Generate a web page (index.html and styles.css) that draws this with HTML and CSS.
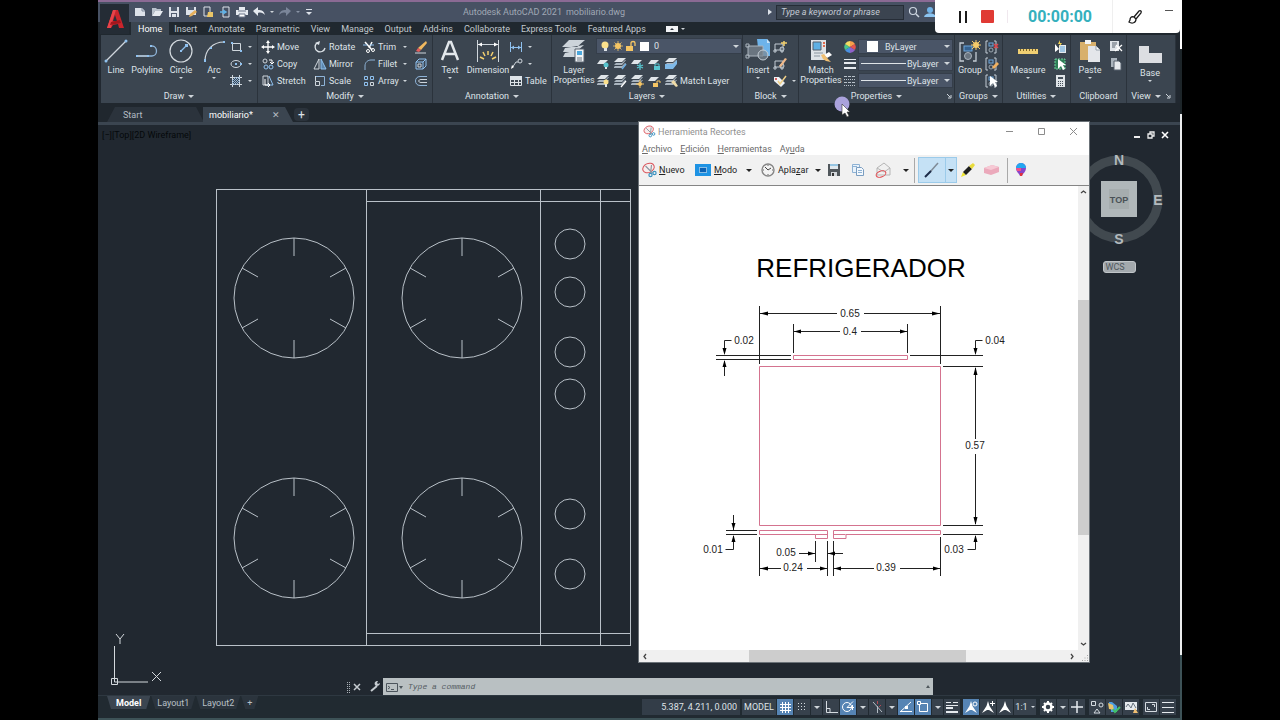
FILE: index.html
```html
<!DOCTYPE html>
<html lang="en">
<head>
<meta charset="utf-8">
<title>Autodesk AutoCAD 2021 - mobiliario.dwg</title>
<link rel="stylesheet" href="styles.css">
</head>
<body>
<svg class="defs" aria-hidden="true">
  <symbol id="stack" viewBox="0 0 14 14"><path d="M5 1h8l-4 4H1z" fill="#dfe4e8"/><path d="M2 7l1-1h6l3-3h1l-4 5H1zM1 10l1-1h7l3-3h1l-4 5H1z" fill="#a9b4be"/></symbol>
  <symbol id="sheet" viewBox="0 0 14 14"><path d="M4 3h8L8 7H1z" fill="#dfe4e8"/></symbol>
  <symbol id="arrow" viewBox="0 0 14 14"><path d="M5 2v10l3-3 2 4 2-1-2-4h3z" fill="#fff"/></symbol>
  <symbol id="group" viewBox="0 0 14 14"><path d="M3 1H1v12h2M9 1h2v12H9" fill="none" stroke="#c3ccd4"/><rect x="4" y="3" width="4" height="3" fill="none" stroke="#6fa8dc"/><circle cx="6" cy="10" r="2" fill="none" stroke="#9aa5af"/></symbol>
  <symbol id="blk" viewBox="0 0 14 14"><path d="M2 4h8v6H2zM1 10h2v2H1zM8 10h2v2H8z" fill="none" stroke="#c3ccd4"/><circle cx="9" cy="9" r="2" fill="#6b7681" stroke="#c3ccd4"/></symbol>
  <symbol id="scissor" viewBox="0 0 16 16"><ellipse cx="7" cy="6" rx="6" ry="4.5" transform="rotate(-25 7 6)" fill="#f8eeee" stroke="#d9535a"/><path d="M4 4l7 7M10 3l-1 9" stroke="#8d98a2" stroke-width="1.2"/><circle cx="9" cy="13" r="1.6" fill="none" stroke="#3d93c0" stroke-width="1.2"/><circle cx="13" cy="11" r="1.6" fill="none" stroke="#3d93c0" stroke-width="1.2"/></symbol>
  <symbol id="person" viewBox="0 0 14 14"><path d="M7 1l1.500 5L13 13l-5-3h-2l-5 3 4.500-7z" fill="#fff"/></symbol>
  <symbol id="burner" viewBox="-61 -61 122 122"><circle r="60"/><path d="M0-60v18M0 60V42M52-30l-16 9M-52-30l16 9M52 30l-16-9M-52 30l16-9"/></symbol>
</svg>

<div class="app">
  <header class="titlebar">
    <button class="logo" aria-label="Application menu"><svg width="22" height="22" viewBox="0 0 22 22"><path d="M3 20L9 2h5l6 18h-5l-1-4-5 1-2 3z" fill="#c9252c"/><path d="M9 2h3l-3 9-2 9H3z" fill="#e8434a"/><path d="M11 7l2 6H9z" fill="#28303a"/><path d="M7 14l9-2 1 3-11 2z" fill="#a3161d"/></svg></button>
    <div class="quick">
      <button aria-label="New"><svg width="12" height="12" viewBox="0 0 12 12"><path d="M1 2h7l3 3v5H1z" fill="#dde2ea"/><path d="M8 2v3h3" fill="none" stroke="#7c879a"/></svg></button>
      <button aria-label="Open"><svg width="12" height="12" viewBox="0 0 12 12"><path d="M1 10V2h4l1 1h4v2H4z" fill="#b9c1cc"/><path d="M4 5h8l-3 5H1z" fill="#e6eaf0"/></svg></button>
      <button aria-label="Save"><svg width="12" height="12" viewBox="0 0 12 12"><path d="M1 1h10v10H1z" fill="#dde2ea"/><path d="M3 1h6v4H3zM3 7h6v4H3z" fill="#525d70"/><path d="M4 8h4v3H4z" fill="#dde2ea"/></svg></button>
      <button aria-label="Save as"><svg width="12" height="12" viewBox="0 0 12 12"><path d="M1 1h10v8H1z" fill="#dde2ea"/><path d="M3 1h6v3H3z" fill="#525d70"/><path d="M4 11l1-3 5-4 2 2-5 4z" fill="#e5b05c"/></svg></button>
      <button aria-label="Open from web"><svg width="12" height="12" viewBox="0 0 12 12"><path d="M2 1h6v9H2z" fill="none" stroke="#dde2ea"/><path d="M6 6h5v5H5z" fill="#eac567"/></svg></button>
      <button aria-label="Save to mobile"><svg width="12" height="12" viewBox="0 0 12 12"><path d="M4 1h6v10H4z" fill="none" stroke="#dde2ea"/><path d="M1 6h5M4 4l3 2-3 2" fill="none" stroke="#5fb2e8" stroke-width="1.500"/></svg></button>
      <button aria-label="Print"><svg width="12" height="12" viewBox="0 0 12 12"><path d="M3 1h6v3h3v5H0V4h3z" fill="#e6eaf0"/><path d="M3 8h6v3H3z" fill="#fff" stroke="#6c778a"/><path d="M2 5h8" stroke="#6c778a"/></svg></button>
      <button aria-label="Undo"><svg width="12" height="12" viewBox="0 0 12 12"><path d="M0 5l5-4v3c4 0 6 1 7 5-2-2-4-3-7-2v3z" fill="#e6eaf0"/></svg></button><i class="car"></i>
      <button aria-label="Redo"><svg width="12" height="12" viewBox="0 0 12 12"><path d="M12 5L7 1v3C3 4 1 5 0 9c2-2 4-3 7-2v3z" fill="#7b869a"/></svg></button><i class="car dim"></i>
      <button aria-label="Customize"><svg width="8" height="8" viewBox="0 0 8 8"><path d="M1 1.500h6" stroke="#dde2ea"/><path d="M1 4h6L4 7z" fill="#dde2ea"/></svg></button>
    </div>
    <div class="caption"><span>Autodesk AutoCAD 2021</span><span>mobiliario.dwg</span></div>
    <div class="search"><i class="tri-r"></i><input type="text" aria-label="Search" placeholder="Type a keyword or phrase"><svg width="12" height="12" viewBox="0 0 12 12"><circle cx="5" cy="5" r="3.500" fill="none" stroke="#cdd5e0" stroke-width="1.200"/><path d="M8 8l3 3" stroke="#cdd5e0" stroke-width="1.500"/></svg><svg width="12" height="12" viewBox="0 0 12 12"><circle cx="6" cy="4" r="3" fill="#6fb1e6"/><path d="M0 11c1-5 11-5 12 0z" fill="#8cc4f0"/></svg></div>
  </header>

  <nav class="tabs">
    <button class="on">Home</button><button>Insert</button><button>Annotate</button><button>Parametric</button><button>View</button><button>Manage</button><button>Output</button><button>Add-ins</button><button>Collaborate</button><button>Express Tools</button><button>Featured Apps</button><button class="min" aria-label="Minimize ribbon"><svg width="12" height="8" viewBox="0 0 12 8"><rect y="1" width="12" height="6" fill="#f2f4f6"/><path d="M4 5h4L6 3z" fill="#28303a"/></svg><i class="car"></i></button>
  </nav>

  <section class="ribbon">
    <div class="panel p-draw">
      <div class="body">
        <button class="big w30"><svg width="26" height="26" viewBox="0 0 26 26"><path d="M3 23L23 3" stroke="#cfd6dc" stroke-width="1.200"/><circle cx="3" cy="23" r="1.500" fill="#8fc1ef"/><circle cx="23" cy="3" r="1.500" fill="#8fc1ef"/></svg>Line</button>
        <button class="big w32"><svg width="26" height="26" viewBox="0 0 26 26"><path d="M3 18h15c6 0 6-10 0-10" fill="none" stroke="#8fb4d8" stroke-width="1.300"/><path d="M3 18h12" stroke="#cfd6dc"/><path d="M2 17h2v2H2zM13 17h2v2h-2zM16 7h2v2h-2z" fill="#8fc1ef"/></svg>Polyline</button>
        <button class="big w36"><svg width="26" height="26" viewBox="0 0 26 26"><circle cx="13" cy="13" r="11" fill="none" stroke="#d5dbe0" stroke-width="1.200"/><path d="M13 13l5-5" stroke="#8fc1ef" stroke-width="1.300"/><path d="M12 12h2v2h-2zM17 6h3v3h-3z" fill="#8fc1ef"/></svg>Circle<i class="car"></i></button>
        <button class="big w30"><svg width="26" height="26" viewBox="0 0 26 26"><path d="M4 23C4 12 12 4 23 4" fill="none" stroke="#d5dbe0" stroke-width="1.200"/><path d="M3 21h2v3H3zM9 9h2v2H9zM22 3h2v2h-2z" fill="#8fc1ef"/></svg>Arc<i class="car"></i></button>
        <div class="col">
          <button class="sm" aria-label="Rectangle"><svg width="14" height="14" viewBox="0 0 14 14"><path d="M3.500 3.500h8v7h-8z" fill="none" stroke="#cfd6dc"/><path d="M2 2h2v2H2zM11 10h2v2h-2z" fill="#8fc1ef"/></svg><i class="car"></i></button>
          <button class="sm" aria-label="Ellipse"><svg width="14" height="14" viewBox="0 0 14 14"><ellipse cx="7" cy="7" rx="5" ry="3.500" fill="none" stroke="#cfd6dc"/><path d="M6 6h2v2H6zM11 6h2v2h-2z" fill="#8fc1ef"/></svg><i class="car"></i></button>
          <button class="sm" aria-label="Hatch"><svg width="14" height="14" viewBox="0 0 14 14"><path d="M3.500 1v12M10.500 1v12M1 3.500h12M1 10.500h12" stroke="#cfd6dc"/><path d="M3 7l4-4M3 11l8-8M7 11l4-4M5 11l6-6M3 9l6-6" stroke="#8fb4d8"/></svg><i class="car"></i></button>
        </div>
      </div>
      <button class="foot">Draw<i class="car lg"></i></button>
    </div>

    <div class="panel p-modify">
      <div class="body pad3">
        <div class="col w52">
          <button class="sm"><svg width="14" height="14" viewBox="0 0 14 14"><path d="M7 2v10M2 7h10" stroke="#fff" stroke-width="1.300"/><path d="M7 0l2 3H5zM7 14l2-3H5zM0 7l3-2v4zM14 7l-3-2v4z" fill="#fff"/></svg>Move</button>
          <button class="sm"><svg width="14" height="14" viewBox="0 0 14 14"><circle cx="4" cy="4" r="2" fill="none" stroke="#cfd6dc"/><path d="M8 3h3v4M9 5l2 2 2-2" fill="none" stroke="#fff"/><circle cx="5" cy="10" r="2" fill="none" stroke="#8fc1ef"/><circle cx="10" cy="10" r="2" fill="none" stroke="#8fc1ef"/></svg>Copy</button>
          <button class="sm"><svg width="14" height="14" viewBox="0 0 14 14"><path d="M2 2h5v9H2z" fill="none" stroke="#cfd6dc"/><path d="M8 2l4 9H6" fill="none" stroke="#8fc1ef"/><path d="M4 5v6l4 0M7 9l2 2-2 2" fill="none" stroke="#fff"/></svg>Stretch</button>
        </div>
        <div class="col w49">
          <button class="sm"><svg width="14" height="14" viewBox="0 0 14 14"><path d="M4 3a5 5 0 1 0 8 5" fill="none" stroke="#dde3e8" stroke-width="1.300"/><path d="M7 1l-1 4-4-2z" fill="#dde3e8"/></svg>Rotate</button>
          <button class="sm"><svg width="14" height="14" viewBox="0 0 14 14"><path d="M6 2v10H1z" fill="none" stroke="#cfd6dc"/><path d="M8 2v10h5z" fill="#5c86ad" stroke="#8fc1ef"/></svg>Mirror</button>
          <button class="sm"><svg width="14" height="14" viewBox="0 0 14 14"><path d="M2.500 2.500h9v9H8" fill="none" stroke="#8fb4d8"/><path d="M2.500 7.500h4v4h-4zM2.500 2v5" fill="none" stroke="#cfd6dc"/></svg>Scale</button>
        </div>
        <div class="col w52">
          <button class="sm"><svg width="14" height="14" viewBox="0 0 14 14"><path d="M3 2l7 8M10 2L7 8" stroke="#fff" stroke-width="1.500"/><path d="M1 5h4M8 5h4" stroke="#8fc1ef"/><circle cx="6" cy="11" r="1.500" fill="none" stroke="#fff"/><circle cx="11" cy="10" r="1.500" fill="none" stroke="#fff"/></svg><span>Trim</span><i class="car"></i></button>
          <button class="sm"><svg width="14" height="14" viewBox="0 0 14 14"><path d="M3 13V9c0-4 3-6 6-6h4" fill="none" stroke="#8fb4d8"/></svg><span>Fillet</span><i class="car"></i></button>
          <button class="sm"><svg width="14" height="14" viewBox="0 0 14 14"><path d="M2.500 2.500h3v3h-3zM8.500 2.500h3v3h-3zM2.500 8.500h3v3h-3z" fill="none" stroke="#8fc1ef"/><path d="M8.500 8.500h3v3h-3z" fill="none" stroke="#cfd6dc"/></svg><span>Array</span><i class="car"></i></button>
        </div>
        <div class="col">
          <button class="sm" aria-label="Erase"><svg width="14" height="14" viewBox="0 0 14 14"><path d="M12 1l1 2-6 7-3-2z" fill="#f0b95f"/><path d="M4 8l3 2-2 2-3-1z" fill="#e35b5b"/><path d="M1 13h11" stroke="#cfd6dc"/></svg></button>
          <button class="sm" aria-label="Explode"><svg width="14" height="14" viewBox="0 0 14 14"><path d="M2 5h7v7H2zM2 5l3-3h7v7l-3 3M9 5l3-3" fill="none" stroke="#8fc1ef"/><path d="M4 7h3v3H4z" fill="none" stroke="#cfd6dc"/></svg></button>
          <button class="sm" aria-label="Offset"><svg width="14" height="14" viewBox="0 0 14 14"><path d="M13 2.500H6C0 2.500 0 11.500 6 11.500h7" fill="none" stroke="#8fb4d8"/><path d="M13 5.500H7C4 5.500 4 8.500 7 8.500h6" fill="none" stroke="#cfd6dc"/></svg></button>
        </div>
      </div>
      <button class="foot">Modify<i class="car lg"></i></button>
    </div>

    <div class="panel p-annot">
      <div class="body">
        <button class="big w34"><svg width="26" height="26" viewBox="0 0 26 26"><path d="M5 22L12 4h2l7 18M8 16h10" fill="none" stroke="#e2e7eb" stroke-width="2.500"/></svg>Text<i class="car"></i></button>
        <button class="big w42"><svg width="26" height="26" viewBox="0 0 26 26"><path d="M2.500 2v22M23.500 2v22M2 6.500h22" stroke="#cfd6dc"/><path d="M3 6.500l4-2v4zM23 6.500l-4-2v4z" fill="#fff"/><path d="M13 13v4M8 14l2 4M18 14l-2 4M5 19l4 2M21 19l-4 2" stroke="#f3d06e" stroke-width="1.500"/></svg>Dimension</button>
        <div class="col">
          <button class="sm" aria-label="Linear"><svg width="14" height="14" viewBox="0 0 14 14"><path d="M1.500 2v10M12.500 2v10M2 7.500h10" stroke="#8fc1ef"/><path d="M2 7.500l3-2v4zM12 7.500l-3-2v4z" fill="#8fc1ef"/></svg><i class="car"></i></button>
          <button class="sm" aria-label="Leader"><svg width="14" height="14" viewBox="0 0 14 14"><path d="M3 11l4-6h2" fill="none" stroke="#cfd6dc"/><circle cx="11" cy="4" r="2" fill="none" stroke="#cfd6dc"/><path d="M2 12l1-4 2 2z" fill="#fff"/></svg><i class="car"></i></button>
          <button class="sm"><svg width="14" height="14" viewBox="0 0 14 14"><path d="M1.500 2.500h11v9h-11zM1 5.500h12M1 8.500h12M5.500 5v7M9.500 5v7" fill="none" stroke="#dde3e8"/><path d="M1 2h12v3H1z" fill="#dde3e8"/></svg>Table</button>
        </div>
      </div>
      <button class="foot">Annotation<i class="car lg"></i></button>
    </div>

    <div class="panel p-layers">
      <div class="body">
        <button class="big w44"><svg width="26" height="26" viewBox="0 0 26 26"><path d="M8 2h16l-8 7H1zM4 10l-2 4h13l8-7zM4 15l-2 4h12l8-8z" fill="#cdd4da"/><path d="M14 11h9v13h-9z" fill="#f1f4f6" stroke="#56616c"/><path d="M16 13h5v4h-5z" fill="#4ba7dc"/><path d="M16 20h5M16 22h5" stroke="#68737e"/></svg>Layer<br>Properties</button>
        <div class="col stretch">
          <div class="drop">
            <svg width="12" height="12" viewBox="0 0 12 12"><circle cx="6" cy="5" r="3.500" fill="#fbe08c"/><path d="M5 8h3v3H5z" fill="#dfe4e8"/></svg>
            <svg width="12" height="12" viewBox="0 0 12 12"><circle cx="6" cy="6" r="3" fill="#f5c564"/><path d="M6 1v10M1 6h10M2.500 2.500l7 7M9.500 2.500l-7 7" stroke="#f5c564" stroke-width=".8"/></svg>
            <svg width="12" height="12" viewBox="0 0 12 12"><path d="M1 6h7v5H1z" fill="#f5c564"/><path d="M6 6V3c0-2 4-2 4 0v3" fill="none" stroke="#f5c564" stroke-width="1.300"/></svg>
            <i class="swatch"></i>
            <select aria-label="Layer"><option>0</option></select><i class="car lg"></i>
          </div>
          <div class="icons">
            <button aria-label="Off"><svg width="14" height="14"><use href="#sheet"/><circle cx="10" cy="8" r="2.500" fill="#58c5cf"/><path d="M9 10h2v2H9z" fill="#dfe4e8"/></svg></button>
            <button aria-label="Isolate"><svg width="14" height="14"><use href="#stack"/><path d="M9 12l4-5" stroke="#6fb1e6" stroke-width="1.500"/></svg></button>
            <button aria-label="Freeze"><svg width="14" height="14"><use href="#sheet"/><path d="M10 6v7M7 8l6 3M13 8l-6 3" stroke="#58c5cf" stroke-width="1.300"/></svg></button>
            <button aria-label="Lock"><svg width="14" height="14"><use href="#sheet"/><path d="M7 9h6v4H7z" fill="#58c5cf"/><path d="M8 9V7h4v2" fill="none" stroke="#58c5cf"/></svg></button>
            <button aria-label="Make current"><svg width="14" height="14"><use href="#stack"/><path d="M1 7h8l4-4v4l-4 5H1z" fill="#7fb9e8"/></svg></button>
          </div>
          <div class="icons">
            <button aria-label="On"><svg width="14" height="14"><use href="#stack"/><circle cx="10" cy="8" r="2.500" fill="#fbe08c"/><path d="M9 10h2v3H9z" fill="#dfe4e8"/></svg></button>
            <button aria-label="Unisolate"><svg width="14" height="14"><use href="#stack"/><path d="M8 13l5-6" stroke="#fff" stroke-width="1.300"/></svg></button>
            <button aria-label="Thaw"><svg width="14" height="14"><use href="#stack"/><circle cx="10" cy="10" r="2" fill="#f5c564"/><path d="M10 6v8M6 10h8" stroke="#f5c564"/></svg></button>
            <button aria-label="Unlock"><svg width="14" height="14"><use href="#sheet"/><path d="M6 9h5v4H6z" fill="#f5c564"/><path d="M10 9V7h3v2" fill="none" stroke="#f5c564"/></svg></button>
            <button><svg width="14" height="14"><use href="#stack"/><path d="M7 8l5 5 2-1-4-6z" fill="#f0dca8"/></svg>Match Layer</button>
          </div>
        </div>
      </div>
      <button class="foot">Layers<i class="car lg"></i></button>
    </div>

    <div class="panel p-block">
      <div class="body">
        <button class="big w30"><svg width="26" height="26" viewBox="0 0 26 26"><path d="M12 1h10l3 3v14H14z" fill="#6db3ea"/><path d="M22 1v4h3" fill="#c8e2f7"/><path d="M3 8h15v10H3z" fill="#6a7580" stroke="#aab4bd"/><path d="M1 6h3v3H1zM1 17h3v3H1z" fill="none" stroke="#aab4bd"/><circle cx="18" cy="17" r="5" fill="#7b8690" fill-opacity=".7" stroke="#c3ccd4"/></svg>Insert<i class="car"></i></button>
        <div class="col">
          <button class="sm" aria-label="Create block"><svg width="14" height="14"><use href="#blk"/><path d="M11 1v5M8 3h6" stroke="#f3d06e" stroke-width="1.500"/></svg></button>
          <button class="sm" aria-label="Edit block"><svg width="14" height="14"><use href="#blk"/><path d="M6 9l6-8 2 1-6 8z" fill="#f0b98a"/></svg></button>
          <button class="sm" aria-label="Attributes"><svg width="14" height="14" viewBox="0 0 14 14"><path d="M1 3h5l6 6-4 4-7-6z" fill="#eef1f4"/><path d="M5 7l2 3 6-8" fill="none" stroke="#f0d088" stroke-width="1.500"/><circle cx="3" cy="5" r="1" fill="#c33"/></svg><i class="car"></i></button>
        </div>
      </div>
      <button class="foot">Block<i class="car lg"></i></button>
    </div>

    <div class="panel p-props">
      <div class="body">
        <button class="big w44"><svg width="26" height="26" viewBox="0 0 26 26"><path d="M3 2h15v20H3z" fill="#dfe4e8"/><path d="M5 4h8v8H5z" fill="#5eb0e4" stroke="#56616c"/><path d="M15 5h2M15 8h2" stroke="#e06a4e" stroke-width="2"/><path d="M6 15h9M6 18h6" stroke="#8b96a0"/><path d="M21 14l3 3-5 3-3-3z" fill="#fff"/><path d="M13 17l3-1 4 5 3 3-5-1-3-2z" fill="#f0bf72"/></svg>Match<br>Properties</button>
        <div class="col stretch">
          <div class="prow"><svg width="14" height="14" viewBox="-7 -7 14 14"><path d="M0 0V-6A6 6 0 0 1 5-3z" fill="#f6a04a"/><path d="M0 0l5-3a6 6 0 0 1 0 6z" fill="#e5544d"/><path d="M0 0l5 3a6 6 0 0 1-5 3z" fill="#8f62c9"/><path d="M0 0v6a6 6 0 0 1-5-3z" fill="#4a8fe0"/><path d="M0 0l-5 3a6 6 0 0 1 0-6z" fill="#4cc48a"/><path d="M0 0l-5-3a6 6 0 0 1 5-3z" fill="#f4dc62"/></svg><div class="drop"><i class="swatch sp"></i><select aria-label="Object color"><option>ByLayer</option></select><i class="car lg"></i></div></div>
          <div class="prow"><svg width="14" height="14" viewBox="0 0 14 14"><path d="M1 2.500h12" stroke="#e6eaee"/><path d="M1 6h12M1 11h12" stroke="#e6eaee" stroke-width="2"/></svg><div class="drop"><i class="rule"></i><select aria-label="Lineweight"><option>ByLayer</option></select><i class="car lg"></i></div></div>
          <div class="prow"><svg width="14" height="14" viewBox="0 0 14 14"><path d="M1 2.500h12M1 8.500h12" stroke="#b9c2ca" stroke-dasharray="3 1"/><path d="M1 5.500h12M1 11.500h12" stroke="#b9c2ca" stroke-dasharray="1 1"/></svg><div class="drop"><i class="rule"></i><select aria-label="Linetype"><option>ByLayer</option></select><i class="car lg"></i></div></div>
        </div>
      </div>
      <button class="foot">Properties<i class="car lg"></i><svg class="launch" width="6" height="6" viewBox="0 0 6 6"><path d="M1 1l3 3M5 2v3H2" fill="none" stroke="#cfd6dc"/></svg></button>
    </div>

    <div class="panel p-groups">
      <div class="body">
        <button class="big w30"><svg width="26" height="26" viewBox="0 0 26 26"><path d="M7 5H3v18h4M16 23h3V14" fill="none" stroke="#c3ccd4" stroke-width="1.300"/><rect x="7" y="8" width="8" height="5" fill="#36628f" stroke="#6fa8dc"/><circle cx="11" cy="18" r="3.500" fill="#6a7580" stroke="#aab4bd"/><circle cx="19" cy="7" r="3" fill="#f3c96a"/><path d="M19 2v10M14 7h10M15 3l8 8M23 3l-8 8" stroke="#f3c96a"/></svg>Group</button>
        <div class="col">
          <button class="sm" aria-label="Ungroup"><svg width="14" height="14"><use href="#group"/><path d="M9 4l4 4M13 4l-4 4" stroke="#e0444a" stroke-width="1.500"/></svg></button>
          <button class="sm" aria-label="Group edit"><svg width="14" height="14"><use href="#group"/><path d="M7 10l5-5 2 2-5 5z" fill="#f0b05f"/></svg></button>
          <button class="sm" aria-label="Group selection"><svg width="14" height="14"><use href="#group"/><use href="#arrow"/></svg></button>
        </div>
      </div>
      <button class="foot">Groups<i class="car lg"></i></button>
    </div>

    <div class="panel p-utils">
      <div class="body">
        <button class="big w50"><svg width="26" height="26" viewBox="0 0 26 26"><path d="M3 11h20v5H3z" fill="#f0cf72"/><path d="M5.500 11v2M8.500 11v2M11.500 11v2M14.500 11v2M17.500 11v2M20.500 11v2" stroke="#7c6428"/></svg>Measure<i class="car"></i></button>
        <div class="col">
          <button class="sm" aria-label="Quick select"><svg width="14" height="14" viewBox="0 0 14 14"><path d="M6 5h7v8H6z" fill="#e6eaee"/><path d="M7 7h5M7 9h5M7 11h5" stroke="#5ba3da"/><path d="M2 4v8l4-3z" fill="#fff"/><path d="M7 0L5 4h2L6 7l3-4H7z" fill="#f5d34c"/></svg></button>
          <button class="sm" aria-label="Select all"><svg width="14" height="14"><rect x="2" y="2" width="10" height="10" fill="#2f7d57" stroke="#6fd39d" stroke-dasharray="2 1"/><use href="#arrow"/></svg></button>
          <button class="sm" aria-label="Calculator"><svg width="14" height="14" viewBox="0 0 14 14"><path d="M3 1h9v12H3z" fill="#dfe4e8"/><path d="M5 3h5v2H5z" fill="#46515c"/><path d="M5 7.500h5M5 9.500h5M5 11.500h5" stroke="#46515c" stroke-dasharray="1 1"/></svg></button>
        </div>
      </div>
      <button class="foot">Utilities<i class="car lg"></i></button>
    </div>

    <div class="panel p-clip">
      <div class="body">
        <button class="big w38"><svg width="26" height="26" viewBox="0 0 26 26"><path d="M3 4h16v18H3z" fill="#d8b06c"/><path d="M8 2h6v4H8z" fill="#f2f4f6"/><path d="M11 8h8l4 4v12H11z" fill="#e4e6ea"/><path d="M19 8v4h4" fill="#fff" stroke="#98a2ac"/></svg>Paste<i class="car"></i></button>
        <div class="col">
          <button class="sm" aria-label="Cut"><svg width="14" height="14" viewBox="0 0 14 14"><path d="M1 1h9v10H1z" fill="#dfe4e8"/><path d="M3 3h5M3 5h5M3 7h3" stroke="#56616c"/><path d="M6 11l7-6M7 5l6 6" stroke="#fff" stroke-width="1.300"/></svg></button>
          <button class="sm" aria-label="Copy clip"><svg width="14" height="14" viewBox="0 0 14 14"><path d="M2 1h6v9H2z" fill="#aab4bd"/><path d="M5 4h5l2 2v7H5z" fill="#e6eaee" stroke="#56616c"/></svg></button>
        </div>
      </div>
      <button class="foot">Clipboard</button>
    </div>

    <div class="panel p-view">
      <div class="body">
        <button class="big w46 base"><svg width="26" height="26" viewBox="0 0 26 26"><path d="M2 5h10v7h13v10H2z" fill="#dcdee2"/></svg>Base<i class="car"></i></button>
      </div>
      <button class="foot">View<i class="car lg"></i><svg width="6" height="6" viewBox="0 0 6 6"><path d="M1 1l3 3M5 2v3H2" fill="none" stroke="#cfd6dc"/></svg></button>
    </div>
  </section>

  <nav class="files">
    <button class="file">Start</button>
    <button class="file on">mobiliario*<span class="x">✕</span></button>
    <button class="add">+</button>
  </nav>

  <main class="canvas">
    <div class="mode">[−][Top][2D Wireframe]</div>
    <svg class="stove" width="416" height="458" viewBox="215 189 416 458">
      <path d="M216 189.500h414.500M216 645.500h414.500M216.500 189v457M366.500 189v457M540.500 189v457M600.500 189v457M630.500 189v457M366 201.500h264M366 633.500h264"/>
      <use href="#burner" x="233" y="237" width="122" height="122"/><use href="#burner" x="401" y="237" width="122" height="122"/>
      <use href="#burner" x="233" y="477" width="122" height="122"/><use href="#burner" x="401" y="477" width="122" height="122"/>
      <circle cx="570" cy="244" r="15"/><circle cx="570" cy="292" r="15"/><circle cx="570" cy="352" r="15"/><circle cx="570" cy="394" r="15"/><circle cx="570" cy="514" r="15"/><circle cx="570" cy="574" r="15"/>
    </svg>
    <svg class="ucs" width="56" height="60" viewBox="108 630 56 60"><path d="M114.500 646v36H148M111.500 678.500h6v6h-6zM116 634l4 5 4-5M120 639v5M152 672l9 9M161 672l-9 9"/></svg>
    <div class="mdi"><button aria-label="Minimize drawing"><svg width="8" height="8" viewBox="0 0 8 8"><path d="M1 6h6" stroke="#eee" stroke-width="2"/></svg></button><button aria-label="Restore drawing"><svg width="8" height="8" viewBox="0 0 8 8"><path d="M3 3V1h4v4H5M1 3h4v4H1z" fill="none" stroke="#eee" stroke-width="1.300"/></svg></button><button aria-label="Close drawing"><svg width="8" height="8" viewBox="0 0 8 8"><path d="M1 1l6 6M7 1L1 7" stroke="#fff" stroke-width="1.600"/></svg></button></div>
    <div class="cube">
      <svg width="96" height="96" viewBox="-48 -48 96 96"><circle r="39" fill="none" stroke="#41494f" stroke-width="9"/><path d="M-18-18h36v36h-36z" fill="#b0b7b9"/><path d="M-10-10h20v20h-20z" fill="#a6adae"/><text class="face" y="4">TOP</text><text y="-34">N</text><text y="45">S</text><text x="39" y="6">E</text></svg>
      <button class="wcs">WCS</button>
    </div>
    <form class="cmd">
      <svg width="36" height="16" viewBox="0 0 36 16"><path d="M1.500 3v11M3.500 3v11" stroke="#a9b0b6" stroke-dasharray="1 1"/><path d="M8 5l6 6M14 5l-6 6" stroke="#c6ccd1" stroke-width="1.500"/><path d="M25 12l6-5" stroke="#c6ccd1" stroke-width="2"/><path d="M34 4l-2 1-1-1 1-2c-3 0-4 2-3 4s5 1 5-2z" fill="#c6ccd1"/></svg>
      <label class="cmdbox"><svg width="22" height="12" viewBox="0 0 22 12"><path d="M3.500 2.500h11v8h-11z" fill="none" stroke="#4c555c"/><path d="M5 5l2 1.500L5 8M8 8.500h3" fill="none" stroke="#4c555c"/><path d="M16 5h4l-2 3z" fill="#4c555c"/></svg><input type="text" aria-label="Command" placeholder="Type a command"><i class="up"></i></label>
    </form>
  </main>

  <footer class="status">
    <nav class="layouts"><button class="on">Model</button><button>Layout1</button><button>Layout2</button><button>+</button></nav>
    <div class="tools">
      <span class="coords">5.387, 4.211, 0.000</span>
      <button class="model sep1">MODEL</button>
      <button class="hot" aria-label="Grid"><svg width="14" height="14" viewBox="0 0 14 14"><path d="M4.500 2v11M7.500 2v11M10.500 2v11M2 4.500h11M2 7.500h11M2 10.500h11" stroke="#fff"/></svg></button>
      <button aria-label="Snap"><svg width="14" height="14" viewBox="0 0 14 14"><path d="M3 3.500h8M3 6.500h8M3 9.500h8" stroke="#d5dbe0" stroke-dasharray="1 2"/></svg></button><i class="dd"></i>
      <button aria-label="Ortho"><svg width="14" height="14" viewBox="0 0 14 14"><path d="M2.500 1v11.500H14M2 8.500h4v4" fill="none" stroke="#d5dbe0"/></svg></button>
      <button class="hot" aria-label="Polar"><svg width="14" height="14" viewBox="0 0 14 14"><circle cx="6" cy="7" r="4.500" fill="none" stroke="#fff"/><path d="M6 7.500l6-6M6 7.500h7M11.500 5v5" stroke="#fff"/></svg></button><i class="dd"></i>
      <button aria-label="Isodraft"><svg width="14" height="14" viewBox="0 0 14 14"><path d="M3 2l9 10M7.500 6v7" stroke="#b4bdc5"/><path d="M7.500 1v3M11 5l-2 2" stroke="#b24a55"/></svg></button><i class="dd"></i>
      <button class="hot" aria-label="Tracking"><svg width="14" height="14" viewBox="0 0 14 14"><path d="M1 12L12 2M1 11.500h12" stroke="#fff"/><path d="M6 6h3v3H6z" fill="#fff"/></svg></button>
      <button class="hot" aria-label="Object snap"><svg width="14" height="14" viewBox="0 0 14 14"><path d="M3.500 3.500h8v8h-8z" fill="none" stroke="#fff"/><path d="M1.500 1.500h3v3h-3z" fill="#5684b4" stroke="#fff"/></svg></button><i class="dd"></i>
      <button aria-label="Lineweight"><svg width="14" height="14" viewBox="0 0 14 14"><path d="M1 2.500h5M8 2.500h5M1 5.500h12" stroke="#e6eaee"/><path d="M1 8h7M1 12h12" stroke="#e6eaee" stroke-width="2"/></svg></button>
      <button class="hot sep2" aria-label="Annotation visibility"><svg width="14" height="14"><use href="#person"/><circle cx="11" cy="4" r="2" fill="#5684b4" stroke="#fff"/></svg></button>
      <button aria-label="Auto scale"><svg width="14" height="14"><use href="#person"/><path d="M11.500 1v5M9 3.500h5" stroke="#fff"/></svg></button>
      <button aria-label="Annotation scale"><svg width="14" height="14"><use href="#person"/></svg></button>
      <button class="ratio">1:1<i class="car"></i></button>
      <button class="sep3" aria-label="Workspace"><svg width="14" height="14" viewBox="-7 -7 14 14"><circle r="3.500" fill="none" stroke="#fff" stroke-width="2.500"/><path d="M0-6v2M0 4v2M-6 0h2M4 0h2M-4-4l1 1M4 4L3 3M-4 4l1-1M4-4L3-3" stroke="#fff" stroke-width="2"/></svg></button><i class="dd"></i>
      <button aria-label="Add"><svg width="14" height="14" viewBox="0 0 14 14"><path d="M7 1v12M1 7h12" stroke="#e6eaee" stroke-width="1.500"/></svg></button>
      <button class="sep3" aria-label="Isolate objects"><svg width="14" height="14" viewBox="0 0 14 14"><path d="M1.500 1.500h4v4h-4zM7 9l3 4H4z" fill="none" stroke="#d5dbe0"/><circle cx="11" cy="5" r="2" fill="none" stroke="#d5dbe0"/></svg></button>
      <button aria-label="Hardware acceleration"><svg width="14" height="14" viewBox="0 0 14 14"><path d="M2 2h3l5 4v6H4V6H2z" fill="#4d9de0"/><path d="M1 3l5 2 1 5-5-1z" fill="#e9c46a"/><path d="M6 9l2 3 5-5" fill="none" stroke="#41c267" stroke-width="2"/></svg></button>
      <button aria-label="Graphics monitor"><svg width="14" height="14" viewBox="0 0 14 14"><path d="M1 2h12v8H1z" fill="#e6eaee"/><path d="M2 7l2-3 3 4 2-5 3 5" fill="none" stroke="#68737e"/><path d="M9 13l2-5 3 5z" fill="#f0bf72"/></svg></button>
      <button class="sep3" aria-label="Clean screen"><svg width="14" height="14" viewBox="0 0 14 14"><path d="M1.500 2.500h11v9h-11z" fill="none" stroke="#d5dbe0"/><path d="M8 4.500h2.500V7M3.500 7v2.500H6" fill="none" stroke="#d5dbe0"/></svg></button>
      <button aria-label="Customization"><svg width="14" height="14" viewBox="0 0 14 14"><path d="M1 2.500h12M1 7.500h12M1 12.500h12" stroke="#e6eaee"/></svg></button>
    </div>
  </footer>

  <section class="snip" aria-label="Herramienta Recortes">
    <div class="snip-title"><svg width="13" height="13"><use href="#scissor"/></svg><span>Herramienta Recortes</span>
      <div class="winbtns"><button aria-label="Minimizar"><svg width="9" height="9" viewBox="0 0 9 9"><path d="M1 4.500h7" stroke="#8c8c8c"/></svg></button><button aria-label="Maximizar"><svg width="9" height="9" viewBox="0 0 9 9"><path d="M1.500 1.500h6v6h-6z" fill="none" stroke="#8c8c8c"/></svg></button><button aria-label="Cerrar"><svg width="9" height="9" viewBox="0 0 9 9"><path d="M1 1l7 7M8 1L1 8" stroke="#8c8c8c"/></svg></button></div>
    </div>
    <nav class="snip-menu"><button><u>A</u>rchivo</button><button><u>E</u>dición</button><button><u>H</u>erramientas</button><button>Ay<u>u</u>da</button></nav>
    <div class="snip-bar">
      <button class="b-new"><svg width="17" height="16" viewBox="0 0 16 16"><use href="#scissor"/></svg><span><u>N</u>uevo</span></button>
      <button class="b-mode"><svg width="16" height="12" viewBox="0 0 16 12"><path d="M0 0h16v12H0z" fill="#1e93e4"/><path d="M4.500 3.500h7v5h-7z" fill="#0b62b5" stroke="#fff" stroke-dasharray="1 1"/></svg><span><u>M</u>odo</span><i class="blk"></i></button>
      <button class="b-delay"><svg width="14" height="14" viewBox="0 0 14 14"><circle cx="7" cy="7" r="6" fill="#f3f3f3" stroke="#868686" stroke-width="1.400"/><path d="M4 4l3 3 3-2" fill="none" stroke="#444"/><path d="M7 2v1M7 11v1M2 7h1M11 7h1" stroke="#666"/></svg><span>Apla<u>z</u>ar</span><i class="blk"></i></button>
      <button class="b-ico" aria-label="Guardar"><svg width="14" height="14" viewBox="0 0 14 14"><path d="M1 1h12v12H1z" fill="#51575c"/><path d="M3 1h8v5H3z" fill="#dfe8ee"/><path d="M4 9h6v4H4z" fill="#d4d8dc"/><path d="M5 10h2v3H5z" fill="#333"/><path d="M3 2h8" stroke="#4fa3d8"/></svg></button>
      <button class="b-ico" aria-label="Copiar"><svg width="14" height="14" viewBox="0 0 14 14"><path d="M1.500 1.500h7v8h-7z" fill="#eaf3fb" stroke="#8eb2d4"/><path d="M5.500 4.500h5l2 2v6h-7z" fill="#f3f8fd" stroke="#7a9dc0"/><path d="M2 3.500h4M7 7.500h4M7 9.500h4" stroke="#8eb2d4"/></svg></button>
      <button class="b-send" aria-label="Enviar"><svg width="17" height="16" viewBox="0 0 17 16"><path d="M2 6l7-5 6 5v7H2z" fill="#f0f0f0" stroke="#b5b5b5"/><path d="M2 6l7 4 6-4" fill="none" stroke="#b5b5b5"/><ellipse cx="6" cy="12" rx="5" ry="3" transform="rotate(-20 6 12)" fill="none" stroke="#e0474d"/></svg><i class="blk"></i></button>
      <span class="vr"></span>
      <button class="b-pen" aria-label="Lápiz"><svg width="18" height="18" viewBox="0 0 18 18"><path d="M7 11l8-9" stroke="#7f8a96" stroke-width="1.500"/><path d="M2 16l6-6" stroke="#1d2b49" stroke-width="2"/></svg></button><button class="b-pendd" aria-label="Opciones de lápiz"><i class="blk"></i></button>
      <button class="b-hl" aria-label="Marcador"><svg width="16" height="16" viewBox="0 0 16 16"><path d="M1 15l2-5 3 3z" fill="#efe62e"/><path d="M3 10l6-6 3 3-6 6z" fill="#1f1f1f"/><path d="M9 4l4-3 2 2-3 4z" fill="#e9dc3b"/></svg></button>
      <button class="b-er" aria-label="Borrador"><svg width="17" height="14" viewBox="0 0 17 14"><path d="M1 5l8-3 7 2v5l-8 3-7-2z" fill="#eba9bb"/><path d="M1 5l8-3 7 2-8 3z" fill="#f6c9d4"/></svg></button>
      <span class="vr"></span>
      <button class="b-3d" aria-label="Paint 3D"><svg width="12" height="14" viewBox="0 0 12 14"><path d="M1 5a5 5 0 0 1 10 0c0 4-3 5-4 8H5C4 10 1 9 1 5z" fill="#8a45c8"/><path d="M1 5a5 5 0 0 1 10 0z" fill="#22a7f0"/><path d="M1 5h5v3H2z" fill="#f0508a"/><path d="M5 10h3l-1 3H5z" fill="#e0323c"/></svg></button>
    </div>
    <div class="snip-body">
      <svg class="plan" viewBox="639 186 439 464" preserveAspectRatio="xMinYMin meet">
        <g class="dim"><path d="M759.500 306v58M940.500 306v58M760 313.500h77M864 313.500h77M793.500 324v29M907.500 324v29M794 331.500h46M861 331.500h46M716 355.500h75M716 359.500h75M724.500 353v-12.500h7M724.500 361v15M910 355.500h73M943 366.500h40M975.500 353v-12.500h7M975.500 368v71M975.500 454v70M943 525.500h40M943 534.500h40M975.500 536v13.500h-8M733.500 515v15M726 530.500h31M726 534.500h31M733.500 536v13.500h-8M759.500 537v39M827.500 541v35M833.500 541v35M940.500 537v39M815.500 541v21M799 553.500h16M828 553.500h15M760 568.500h21M807 568.500h20M834 568.500h40M900 568.500h40"/></g>
        <g class="red"><path d="M793.500 355.500h114v4h-114zM759.500 366.500h181v159h-181zM759.500 530.500h68v8h-12v-4h-56zM815.500 534.500h12M833.500 530.500h107v4h-94.500v4h-12.500zM833.500 534.500h12"/></g>
        <g class="heads"><path d="M760 313.500l8-2v4zM940 313.500l-8-2v4zM794 331.500l7-2v4zM907 331.500l-7-2v4zM724.500 355l-2-7h4zM724.500 360l-2 7h4zM975.500 355l-2-7h4zM975.500 367l-2 8h4zM975.500 525l-2-8h4zM975.500 535l-2 7h4zM733.500 530l-2-7h4zM733.500 535l-2 7h4zM815 553.500l-7-2v4zM828 553.500l7-2v4zM760 568.500l8-2v4zM827 568.500l-7-2v4zM834 568.500l7-2v4zM940 568.500l-7-2v4z"/></g>
        <text class="h" x="861" y="277">REFRIGERADOR</text>
        <g class="num"><text x="850" y="317">0.65</text><text x="850" y="335">0.4</text><text x="744" y="344">0.02</text><text x="995" y="344">0.04</text><text x="975" y="449">0.57</text><text x="713" y="553">0.01</text><text x="786" y="556">0.05</text><text x="793" y="571">0.24</text><text x="886" y="571">0.39</text><text x="954" y="553">0.03</text></g>
      </svg>
      <div class="vscroll"><svg width="7" height="6" viewBox="0 0 7 6"><path d="M1 4l2.500-2L6 4" fill="none" stroke="#444" stroke-width="1.300"/></svg><span class="track"><i></i></span><svg width="7" height="6" viewBox="0 0 7 6"><path d="M1 2l2.500 2L6 2" fill="none" stroke="#444" stroke-width="1.300"/></svg></div>
      <div class="hscroll"><svg width="6" height="7" viewBox="0 0 6 7"><path d="M4 1L2 3.500 4 6" fill="none" stroke="#444" stroke-width="1.300"/></svg><span class="track"><i></i></span><svg width="6" height="7" viewBox="0 0 6 7"><path d="M2 1l2 2.500L2 6" fill="none" stroke="#444" stroke-width="1.300"/></svg></div>
      <div class="grip"><svg width="8" height="8" viewBox="0 0 8 8"><path d="M6 1h1v1H6zM6 3.500h1v1H6zM3.500 3.500h1v1h-1zM6 6h1v1H6zM3.500 6h1v1h-1zM1 6h1v1H1z" fill="#a5a5a5"/></svg></div>
    </div>
  </section>

  <section class="rec" aria-label="Recorder">
    <button class="r-pause" aria-label="Pause"><svg width="12" height="12" viewBox="0 0 12 12"><path d="M2 0h2v12H2zM8 0h2v12H8z" fill="#1c1c1c"/></svg></button>
    <button class="r-stop" aria-label="Stop"><svg width="13" height="13" viewBox="0 0 13 13"><rect width="13" height="13" rx="1" fill="#e03a34"/></svg></button>
    <span class="clock">00:00:00</span>
    <button class="r-brush" aria-label="Draw"><svg width="16" height="16" viewBox="0 0 16 16"><path d="M7 8l5-6c1-1 3 0 2 2L9 10zM7 8c-3-1-4 1-4 3l-1 2c3 2 7 1 7-3z" fill="none" stroke="#1c1c1c" stroke-width="1.300"/></svg></button>
    <button class="r-min" aria-label="Hide"><svg width="8" height="3" viewBox="0 0 8 3"><path d="M0 1.500h8" stroke="#555"/></svg></button>
  </section>

  <svg class="pointer" width="20" height="24" viewBox="0 0 20 24"><circle cx="8" cy="8" r="7.500" fill="#aaa2dc"/><path d="M8 8v11l3-2 2 4 2-1-2-4h3z" fill="#fff" stroke="#333" stroke-width=".6"/></svg>
</div>
</body>
</html>
```
FILE: styles.css
```css
* { box-sizing: border-box; }
body { margin: 0; min-height: 100vh; display: flex; padding: 0 98px; background: #000; color: #dfe3e8; font-family: Roboto, "Noto Sans", sans-serif; font-size: 9px; line-height: 10px; }
button, input, select { font: inherit; color: inherit; background: none; border: 0; padding: 0; margin: 0; border-radius: 0; }
svg { display: block; flex: none; }
.defs { position: absolute; width: 0; height: 0; }
select { appearance: none; outline: 0; }
input { outline: 0; min-width: 0; }
i { font-style: normal; }

.app { position: relative; flex: 1; min-width: 0; display: flex; flex-direction: column; background: #212830; border-right: 2px solid; border-image: linear-gradient(#fff 7%, #1d2529 7%, #1d2529 16%, #eceeef 16%, #eceeef 91%, #3d5257 91%) 2; border-bottom: 2px solid; border-left: 0; border-top: 0; }
.car, .up, .dd::before, .blk { display: block; flex: none; width: 0; height: 0; border: 2px solid transparent; border-top-color: #cfd5da; border-bottom: 0; }
.car.lg { border-width: 3px; border-bottom: 0; }
.car.dim { border-top-color: #8a94a6; }

/* Title bar */
.titlebar { display: flex; align-items: center; height: 22px; border-top: 2px solid #8b6a94; background: #475163; padding-left: 36px; }
.logo { position: absolute; left: 2px; top: 4px; width: 29px; height: 30px; background: #242c35; display: flex; align-items: center; justify-content: center; z-index: 2; }
.quick { display: flex; align-items: center; gap: 5px; }
.caption { display: flex; gap: 4px; margin-left: 150px; color: #a0a8b5; white-space: nowrap; }
.search { display: flex; align-items: center; gap: 4px; margin-left: auto; padding-right: 244px; }
.search input { width: 128px; height: 15px; background: #3b4450; border: 1px solid #262d37; padding: 0 4px; font-style: italic; }
.search input::placeholder { color: #c3cad3; opacity: 1; }
.tri-r { border: 3px solid transparent; border-left: 4px solid #dde2ea; border-right: 0; }

/* Ribbon tabs */
.tabs { display: flex; height: 13px; padding-left: 33px; background: #20282f; }
.tabs button { padding: 0 6px 0 5px; color: #c2c8ce; white-space: nowrap; }
.tabs .on { background: #3b4550; color: #fff; padding: 0 7px; }
.tabs .min { display: flex; align-items: center; gap: 3px; padding-left: 14px; }

/* Ribbon panels */
.ribbon { display: flex; height: 68px; margin: 0 4px 0 3px; background: #3b4550; }
.panel { display: flex; flex-direction: column; min-width: 0; border-right: 1px solid #2b333c; }
.p-draw { flex: 1 1 157px; }
.p-modify { flex: 1 1 175px; }
.p-annot { flex: 1 1 119px; }
.p-layers { flex: 1 1 191px; }
.p-block { flex: 1 1 56px; }
.p-props { flex: 1 1 156px; }
.p-groups { flex: 1 1 48px; }
.p-utils { flex: 1 1 68px; }
.p-clip { flex: 1 1 56px; }
.p-view { flex: 1 1 49px; }
.body { flex: 1; display: flex; padding-top: 3px; white-space: nowrap; }
.pad3 { padding-left: 3px; }
.foot { position: relative; display: flex; align-items: center; justify-content: center; gap: 4px; height: 14px; width: 100%; }
.launch { position: absolute; right: 2px; top: 4px; }
.big { display: flex; flex-direction: column; align-items: center; flex: none; text-align: center; justify-content: flex-start; }
.big svg { margin-bottom: 1px; }
.big .car { margin-top: 2px; }
.base { padding-top: 3px; }
.w30 { width: 30px; }
.w32 { width: 32px; }
.w34 { width: 34px; }
.w36 { width: 36px; }
.w38 { width: 38px; }
.w42 { width: 42px; }
.w44 { width: 44px; }
.w46 { width: 46px; }
.w49 { width: 49px; }
.w50 { width: 50px; }
.w52 { width: 52px; }
.col { display: flex; flex-direction: column; flex: none; }
.stretch { flex: 1; min-width: 0; }
.sm { display: flex; align-items: center; gap: 2px; height: 17px; }
.sm .car { margin-left: 3px; }
.sm span { width: 20px; text-align: left; }
.drop { flex: 1; display: flex; align-items: center; gap: 1px; height: 15px; padding: 0 2px; background: #4a5567; border: 1px solid #353e4a; min-width: 0; }
.stretch > .drop { flex: none; height: 16px; margin-bottom: 1px; }
.drop select { flex: 1; min-width: 0; }
.swatch { width: 9px; height: 9px; background: #fff; margin: 0 4px 0 2px; }
.swatch.sp { width: 11px; height: 11px; margin: 0 6px; }
.rule { width: 45px; height: 1px; background: #dfe4e8; }
.icons { display: flex; height: 17px; gap: 3px; }
.icons button { display: flex; align-items: center; gap: 2px; }
.prow { display: flex; align-items: center; height: 17px; gap: 1px; padding-right: 1px; }

/* Drawing file tabs */
.files { display: flex; align-items: flex-end; height: 22px; padding-left: 9px; border-bottom: 3px solid #3b4550; background: #20272e; }
.file { height: 15px; width: 97px; padding-left: 16px; text-align: left; color: #b5bcc3; background: #2b333c; clip-path: polygon(8px 0, calc(100% - 8px) 0, 100% 100%, 0 100%); }
.file.on { display: flex; align-items: center; justify-content: space-between; width: 90px; padding: 0 13px 0 6px; margin-left: -1px; color: #fff; background: #3b4550; clip-path: polygon(0 0, calc(100% - 8px) 0, 100% 100%, 0 100%); }
.x { color: #b5bcc3; }
.add { width: 15px; height: 13px; margin: 0 0 1px 1px; border-radius: 4px; background: #2b333c; font-size: 12px; }

/* Drawing area */
.canvas { position: relative; flex: 1; }
.mode { padding: 5px 0 0 4px; color: #05080b; }
.stove { position: absolute; left: 117px; top: 64px; fill: none; stroke: #b9c1c8; stroke-width: 1; }
.ucs { position: absolute; left: 10px; bottom: 5px; fill: none; stroke: #d4d9dd; }
.mdi { position: absolute; right: 11px; top: 6px; display: flex; gap: 6px; }
.cube { position: absolute; right: 13px; top: 26px; display: flex; flex-direction: column; align-items: center; gap: 14px; }
.cube text { fill: #b3babd; font: bold 14px "Liberation Sans", sans-serif; text-anchor: middle; }
.cube .face { fill: #4a5256; font: bold 9px "Liberation Sans", sans-serif; }
.wcs { width: 33px; height: 12px; border-radius: 3px; background: #a3a9ad; color: #50585d; border: 1px solid #c0c5c8; text-align: left; padding-left: 2px; }
.cmd { position: absolute; left: 248px; bottom: 0; width: 587px; display: flex; align-items: center; gap: 1px; }
.cmdbox { flex: 1; display: flex; align-items: center; gap: 3px; height: 17px; background: #b9c0c2; padding-right: 3px; }
.cmdbox input { flex: 1; font: italic 8px "Liberation Mono", monospace; }
.cmdbox input::placeholder { color: #555d62; opacity: 1; }
.up { border-top: 0; border-bottom: 3px solid #50585d; }

/* Status bar */
.status { display: flex; justify-content: space-between; height: 23px; padding-right: 4px; background: #212a31; border-top: 1px solid #2e3841; }
.layouts { display: flex; gap: 1px; height: 13px; padding-left: 9px; }
.layouts button { padding: 0 6px; background: #2b343d; color: #b9c0c6; clip-path: polygon(0 0, 100% 0, calc(100% - 4px) 100%, 4px 100%); }
.layouts .on { background: #3b4550; color: #fff; font-weight: bold; padding: 0 9px; }
.tools { display: flex; align-items: center; gap: 1px; }
.tools button { display: flex; align-items: center; justify-content: center; width: 16px; height: 16px; background: #37414c; }
.tools .hot { background: #5684b4; }
.coords { width: 98px; height: 16px; padding: 3px 3px 0 0; background: #333d48; text-align: right; white-space: nowrap; }
.tools .model { width: 34px; }
.tools .ratio { width: 22px; gap: 3px; }
.dd { display: flex; align-items: center; justify-content: center; width: 11px; height: 16px; background: #37414c; }
.dd::before { content: ""; border-width: 3px; border-bottom: 0; }
.tools .sep1 { margin-left: 1px; }
.tools .sep2 { margin-left: 2px; }
.tools .sep3 { margin-left: 3px; }

/* Snipping window */
.snip { position: absolute; left: 540px; top: 121px; width: 452px; height: 542px; display: flex; flex-direction: column; background: #fff; border: 1px solid #6b7278; color: #222; }
.snip-title { display: flex; align-items: center; gap: 2px; height: 19px; padding-left: 4px; color: #8f8f8f; }
.winbtns { display: flex; gap: 23px; margin-left: auto; padding-right: 11px; }
.snip-menu { display: flex; gap: 8px; height: 14px; padding: 2px 0 0 3px; }
.snip-menu button { height: 12px; color: #6a6a6a; }
.snip-bar { display: flex; align-items: center; height: 31px; background: #f1f1f1; border-bottom: 1px solid #858585; padding-left: 2px; }
.snip-bar button { display: flex; align-items: center; }
.b-new { width: 54px; gap: 1px; }
.b-mode { width: 66px; gap: 3px; }
.b-delay { width: 66px; gap: 3px; }
.snip-bar .blk { margin-left: auto; margin-right: 9px; border-width: 3px; border-bottom: 0; border-top-color: #222; }
.snip-bar .b-delay .blk { margin-right: 6px; }
.b-ico { width: 24px; }
.b-send { width: 39px; }
.snip-bar .b-send .blk { margin-right: 5px; }
.vr { width: 1px; height: 25px; background: #a9a9a9; margin-right: 3px; }
.snip-bar .b-pen { width: 28px; height: 26px; justify-content: center; background: #c5e1f5; border: 1px solid #9ccbea; }
.snip-bar .b-pendd { width: 11px; height: 26px; justify-content: center; background: #c5e1f5; border: 1px solid #9ccbea; border-left: 0; }
.snip-bar .b-pendd .blk { margin: 0; }
.b-hl { margin-left: 3px; width: 23px; }
.b-er { width: 24px; }
.b-3d { margin-left: 4px; }
.snip-body { flex: 1; display: grid; grid-template-columns: 1fr 11px; grid-template-rows: 1fr 12px; min-height: 0; }
.plan { width: 100%; height: 100%; min-height: 0; }
.red { fill: none; stroke: #d4738f; }
.dim { fill: none; stroke: #222; }
.heads { fill: #000; }
.plan text { text-anchor: middle; font-family: "Liberation Sans", Arial, sans-serif; fill: #222; }
.plan .num text { font-size: 10px; }
.plan .h { font-size: 26px; fill: #000; }
.vscroll, .hscroll { display: flex; align-items: center; background: #f0f0f0; padding: 3px 0; }
.vscroll { flex-direction: column; }
.hscroll { padding: 0 3px; }
.track { flex: 1; align-self: stretch; display: flex; }
.vscroll .track { flex-direction: column; padding: 105px 0 106px; }
.hscroll .track { margin: 0 103px 0 101px; }
.track i { flex: 1; background: #cdcdcd; }
.grip { background: #f0f0f0; display: flex; align-items: flex-end; justify-content: flex-end; }

/* Recorder */
.rec { position: absolute; right: 0; top: 0; width: 245px; height: 33px; display: flex; align-items: center; background: #fff; border-radius: 0 0 4px 4px; padding-left: 22px; }
.r-stop { margin-left: 12px; padding-right: 13px; border-right: 1px solid #f0e8ee; }
.clock { flex: 1; text-align: center; color: #35b0bd; font: 700 16px/33px Roboto, sans-serif; border-right: 1px solid #efefef; }
.r-brush { margin-left: 14px; }
.r-min { align-self: flex-start; margin: 9px 7px 0 22px; }
.pointer { position: absolute; left: 736px; top: 96px; }
```
